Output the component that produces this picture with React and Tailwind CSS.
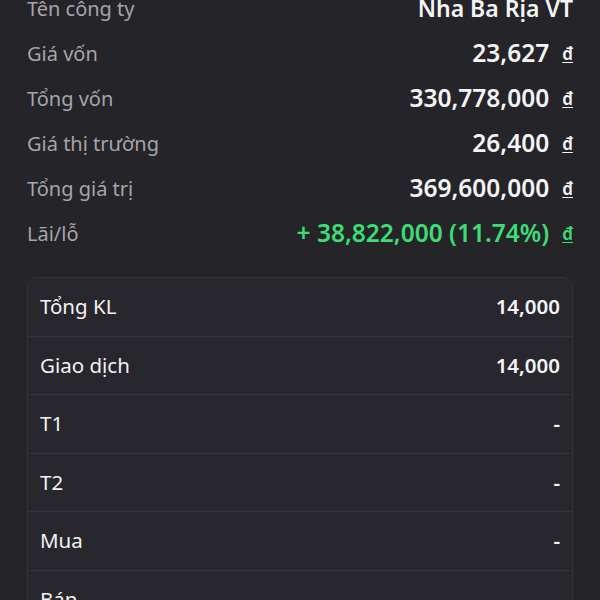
import React from 'react';

const summary = [
  { label: 'Tên công ty', value: 'Nha Ba Rịa VT', unit: false },
  { label: 'Giá vốn', value: '23,627', unit: true },
  { label: 'Tổng vốn', value: '330,778,000', unit: true },
  { label: 'Giá thị trường', value: '26,400', unit: true },
  { label: 'Tổng giá trị', value: '369,600,000', unit: true },
  { label: 'Lãi/lỗ', value: '+ 38,822,000 (11.74%)', unit: true, gain: true },
];

const volumes = [
  { label: 'Tổng KL', value: '14,000' },
  { label: 'Giao dịch', value: '14,000' },
  { label: 'T1', value: '-' },
  { label: 'T2', value: '-' },
  { label: 'Mua', value: '-' },
  { label: 'Bán', value: '-' },
];

function App() {
  return (
    <div
      className="h-[600px] w-[600px] overflow-hidden bg-[#252429] px-[27px]"
      style={{ fontFamily: '"Noto Sans", sans-serif' }}
    >
      {/* summary list, scrolled so the first row is cut */}
      <div className="-mt-[14px]">
        {summary.map((row) => (
          <div key={row.label} className="flex h-[45px] items-center justify-between">
            <span className="text-[20px] text-[#a6a5ab]">{row.label}</span>
            <div className="flex items-center">
              <span
                className={
                  'font-semibold ' +
                  (row.unit ? 'text-[24.5px] ' : 'text-[23px] ') +
                  (row.gain ? 'text-[#3ddc74]' : 'text-[#f4f4f5]')
                }
              >
                {row.value}
              </span>
              {row.unit && (
                <span
                  className={
                    'ml-[13px] text-[17px] font-semibold underline underline-offset-2 ' +
                    (row.gain ? 'text-[#3ddc74]' : 'text-[#f4f4f5]')
                  }
                >
                  đ
                </span>
              )}
            </div>
          </div>
        ))}
      </div>

      {/* volume card */}
      <div className="mt-[21px] rounded-[10px] border border-[#35343a] bg-[#28272d]">
        {volumes.map((row) => (
          <div
            key={row.label}
            className="flex h-[58.5px] items-center justify-between border-b border-[#35343a] px-[12px]"
          >
            <span className="text-[20.5px] text-[#f2f2f3]">{row.label}</span>
            <span className="text-[20.5px] font-semibold text-[#f4f4f5]">{row.value}</span>
          </div>
        ))}
      </div>
    </div>
  );
}

export default App;
